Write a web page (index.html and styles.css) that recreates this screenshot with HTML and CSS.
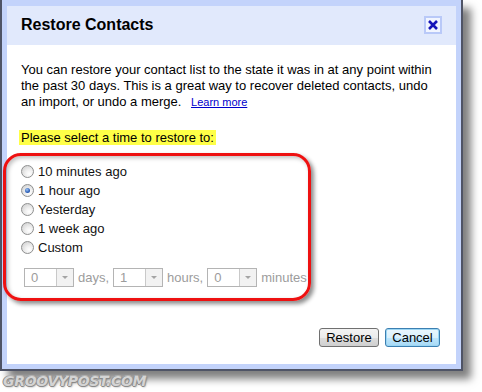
FILE: index.html
```html
<!DOCTYPE html>
<html lang="en">
<head>
  <meta charset="UTF-8" />
  <title>Restore Contacts</title>
  <link rel="stylesheet" href="styles.css">
</head>
<body>
  <div class="dialog">
    <!-- Cabeçalho -->
    <div class="dialog-head">
      <h1>Restore Contacts</h1>
      <span class="close">
        <svg width="14" height="14" viewBox="0 0 14 14"><path d="M3 3 L11 11 M11 3 L3 11" stroke="#1414b8" stroke-width="2.6" fill="none"/></svg>
      </span>
    </div>
    <div class="dialog-body">
      <p class="intro">You can restore your contact list to the state it was in at any point within<br>the past 30 days. This is a great way to recover deleted contacts, undo<br>an import, or undo a merge. <a class="learn" href="#">Learn more</a></p>
      <p class="prompt"><span class="hl">Please select a time to restore to:</span></p>
      <ul class="options">
        <li><span class="radio"></span>10 minutes ago</li>
        <li><span class="radio checked"></span>1 hour ago</li>
        <li><span class="radio"></span>Yesterday</li>
        <li><span class="radio"></span>1 week ago</li>
        <li><span class="radio"></span>Custom</li>
      </ul>
      <div class="custom-row">
        <span class="sel"><span class="val">0</span><span class="arrow"></span></span>
        <span class="unit">days,</span>
        <span class="sel"><span class="val">1</span><span class="arrow"></span></span>
        <span class="unit">hours,</span>
        <span class="sel"><span class="val">0</span><span class="arrow"></span></span>
        <span class="unit">minutes</span>
      </div>
      <div class="actions">
        <button class="btn btn-restore">Restore</button>
        <button class="btn btn-cancel">Cancel</button>
      </div>
    </div>
  </div>
  <!-- Marcação vermelha por cima das opções -->
  <div class="callout"></div>
  <div class="watermark">GROOVYPOST.COM</div>
</body>
</html>
```

FILE: styles.css
```css
:root {
  --frame: #4f5466;
  --frame-blue: #c3d3fb;
  --head-bg: #e1e9fc;
  --muted: #9c9c9c;
}
* { margin: 0; padding: 0; box-sizing: border-box; }
body {
  background: #fff;
  font-family: "Liberation Sans", Arial, sans-serif;
  font-size: 13px;
  color: #000;
  position: relative;
  width: 482px;
  height: 392px;
  overflow: hidden;
}
.dialog {
  width: 463px;
  background: var(--frame-blue);
  border: 2px solid var(--frame);
  border-top: 0;
  padding: 6px 5px 5px;
  box-shadow: 8px 8px 8px rgba(0, 0, 0, 0.5);
}
.dialog-head {
  background: var(--head-bg);
  height: 39px;
  padding: 10px 14px 0;
  display: flex;
  justify-content: space-between;
  align-items: flex-start;
}
.dialog-head h1 {
  font-size: 16px;
  line-height: 18px;
  font-weight: bold;
}
.close {
  width: 18px;
  height: 18px;
  border: 2px solid #b9c9f8;
  background: #f1f5ff;
  display: flex;
  align-items: center;
  justify-content: center;
}
.dialog-body {
  background: #fff;
  height: 319px;
  padding: 17px 14px;
}
.intro { line-height: 16px; }
.learn {
  font-size: 11px;
  color: #0000cc;
  margin-left: 6px;
}
.prompt { margin-top: 20px; line-height: 15px; }
.hl {
  display: inline-block;
  background: #ffff47;
  padding: 0 2px;
  margin-left: -2px;
}
.options {
  list-style: none;
  margin-top: 17px;
}
.options li {
  height: 19px;
  display: flex;
  align-items: center;
  color: #111;
}
.radio {
  width: 13px;
  height: 13px;
  border-radius: 50%;
  border: 1px solid #8e8f8f;
  background: radial-gradient(circle at 65% 70%, #fff 0, #f0f0f0 35%, #c9c9c9 100%);
  margin-right: 4px;
  position: relative;
}
.radio.checked::after {
  content: "";
  position: absolute;
  left: 3px;
  top: 3px;
  width: 5px;
  height: 5px;
  border-radius: 50%;
  background: radial-gradient(circle at 40% 35%, #9fc6f4 0, #2c5fb8 60%, #173f8c 100%);
}
.custom-row {
  margin-top: 11px;
  margin-left: 3px;
  display: flex;
  align-items: center;
  gap: 4px;
  color: var(--muted);
}
.sel {
  width: 50px;
  height: 19px;
  border: 1px solid #b4b4b4;
  display: flex;
}
.sel .val {
  flex: 1;
  padding-left: 6px;
  line-height: 17px;
}
.sel .arrow {
  width: 17px;
  border-left: 1px solid #c9c9c9;
  background: #f2f2f2;
  position: relative;
}
.sel .arrow::after {
  content: "";
  position: absolute;
  left: 5px;
  top: 7px;
  border-left: 3px solid transparent;
  border-right: 3px solid transparent;
  border-top: 3px solid #a4a4a4;
}
.actions {
  margin-top: 41px;
  display: flex;
  justify-content: flex-end;
  gap: 6px;
  padding-right: 2px;
}
.btn {
  height: 19px;
  font-family: "Liberation Sans", Arial, sans-serif;
  font-size: 13px;
  line-height: 15px;
  color: #000;
  border: 1px solid #707070;
  border-radius: 3px;
  background: linear-gradient(#f3f3f3, #ebebeb 50%, #dddddd 51%, #cfcfcf);
}
.btn-restore { width: 60px; }
.btn-cancel {
  width: 55px;
  border-color: #3c7fb1;
  box-shadow: inset 0 0 0 1px #9bd6f4;
  background: linear-gradient(#eaf6fd, #d9f0fc 50%, #bee6fd 51%, #a7d9f5);
}
.callout {
  position: absolute;
  left: 3px;
  top: 153px;
  width: 308px;
  height: 148px;
  border: 3px solid #ee1111;
  border-radius: 18px;
  box-shadow: 3px 3px 4px rgba(0, 0, 0, 0.45), inset 2px 2px 4px rgba(0, 0, 0, 0.25);
}
.watermark {
  margin: 2px 0 0 3px;
  font-family: "DejaVu Sans", sans-serif;
  font-weight: bold;
  font-style: italic;
  font-size: 14px;
  line-height: 16px;
  color: #d4d4d4;
  letter-spacing: -0.3px;
  text-shadow: -1px 0 #8a8a8a, 0 1px #8a8a8a, 1px 0 #9a9a9a, 0 -1px #b0b0b0, 1px 1px 2px rgba(0,0,0,0.4);
}
```
